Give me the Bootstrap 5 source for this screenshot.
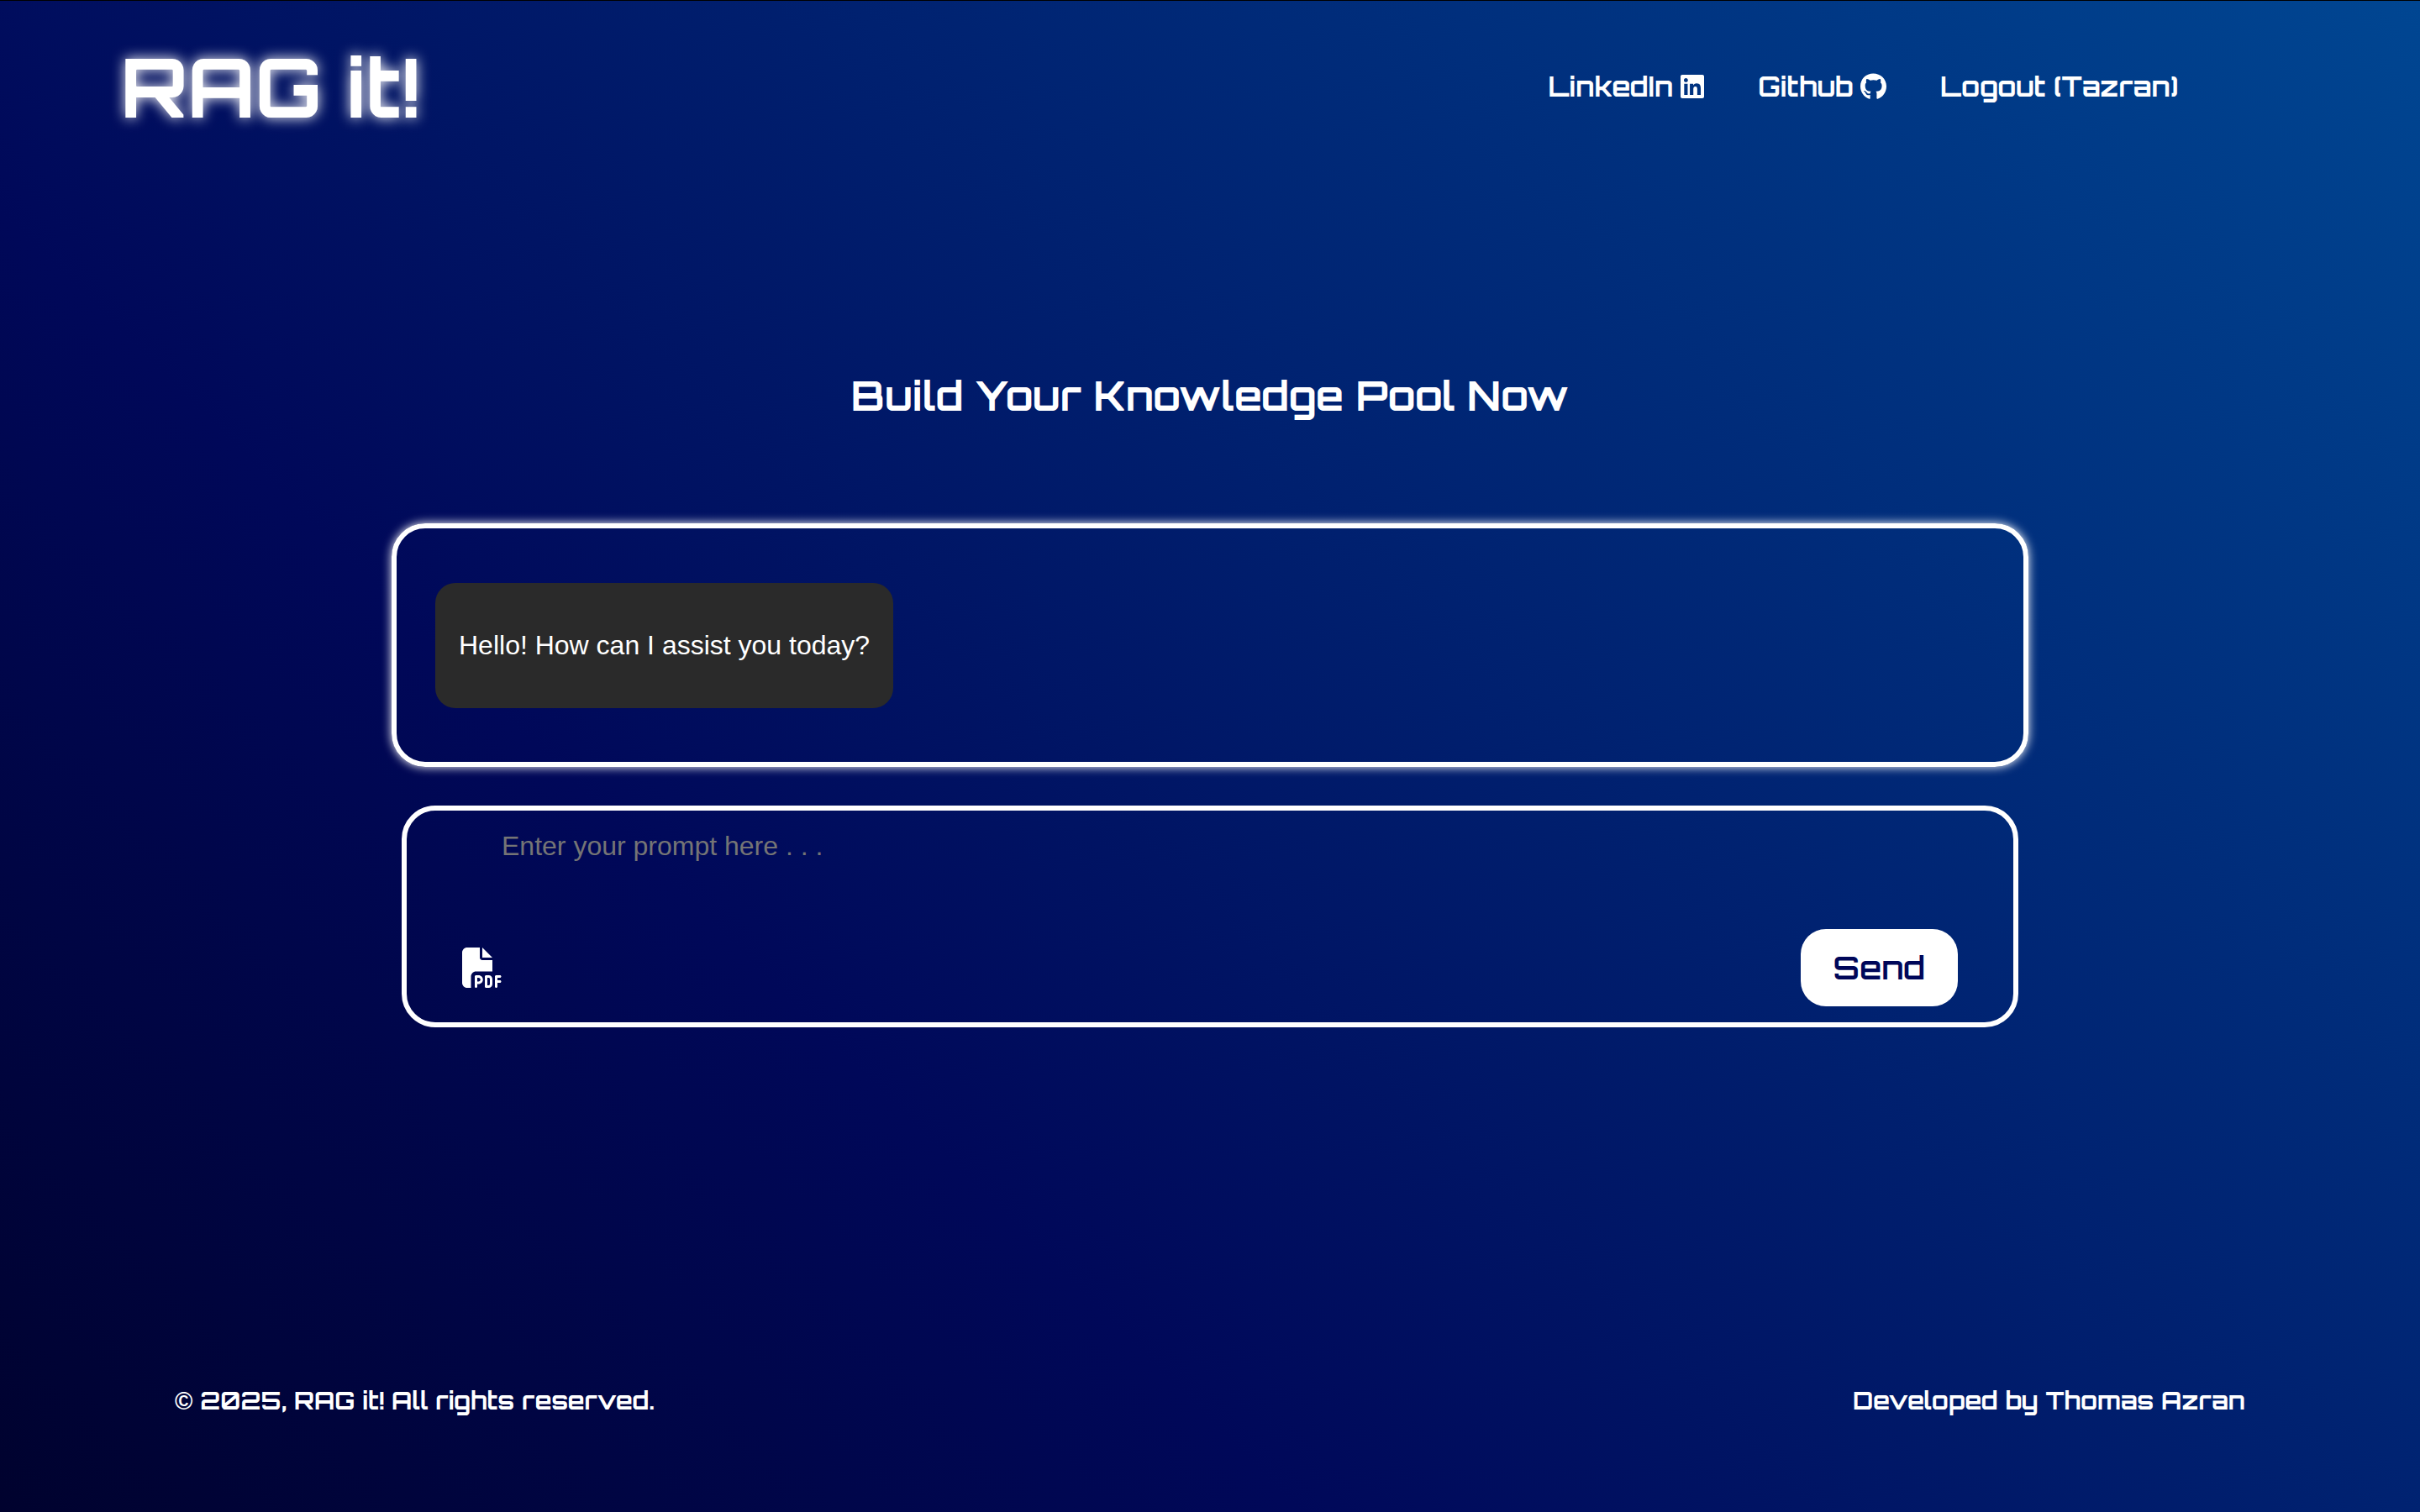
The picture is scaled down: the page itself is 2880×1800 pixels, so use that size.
<!DOCTYPE html>
<html lang="en">
<head>
<meta charset="utf-8">
<meta name="viewport" content="width=device-width, initial-scale=1">
<title>RAG it!</title>
<link href="https://cdn.jsdelivr.net/npm/bootstrap@5.3.0/dist/css/bootstrap.min.css" rel="stylesheet">
<style>
  body {
    font-family: Orbitron, "Liberation Sans", Arial, sans-serif;
    font-weight: 700;
    color: #fff;
    background: linear-gradient(45deg, #00022e 0%, #000859 33%, #004692 100%) no-repeat;
    border-top: 1px solid #000;
  }
  .site-header { padding: 52px 10% 0 5%; }
  .brand-name { font-size: 96px; line-height: 100px; text-shadow: 0 0 16px #fff; }
  .site-nav { gap: 64px; padding-top: 30px; font-size: 32px; line-height: 40px; }
  .site-nav a { gap: 9px; }
  .site-nav svg { height: 32px; fill: currentColor; }
  .chat-main { padding-top: 286px; }
  .chat-title { font-size: 48px; line-height: 64px; font-weight: 700; margin-bottom: 120px; }
  .chat-column { max-width: 1948px; gap: 46px; }
  .chat-log, .prompt-form { border: 6px solid #fff; border-radius: 40px; }
  .chat-log { padding: 65px 46px 64px; box-shadow: 0 0 12px #fff; }
  .bubble, .prompt-text { font: 400 32px/37px "Liberation Sans", Arial, sans-serif; }
  .bubble { padding: 56px 28px; border-radius: 24px; background: #2a2a2a; }
  .prompt-form { margin: 0 12px; }
  .prompt-text {
    height: 141px; padding: 24px 113px; color: #fff; resize: none; outline: 0;
  }
  .prompt-text::placeholder { color: #757575; opacity: 1; }
  .prompt-actions { padding: 0 66px 19px; }
  .pdf-btn svg { display: block; width: 48px; height: 48px; fill: #fff; }
  .send-btn {
    height: 92px; padding: 0 39px; border-radius: 30px; background: #fff;
    color: #000759; font-size: 38px; line-height: 48px; font-weight: 600;
  }
  .send-btn:hover { background: #dfe6ff; color: #000759; }
  .site-footer { padding: 0 208px 113px; font-size: 29px; line-height: 40px; }
</style>
</head>
<body class="d-flex flex-column min-vh-100">
  <header class="site-header d-flex justify-content-between align-items-start">
    <a href="#" class="brand-name text-white text-decoration-none">RAG it!</a>
    <nav class="site-nav d-flex align-items-center">
      <a href="#" class="d-flex align-items-center text-white text-decoration-none">LinkedIn
        <svg viewBox="0 0 448 512" aria-hidden="true"><path d="M416 32H31.9C14.3 32 0 46.5 0 64.3v383.4C0 465.5 14.3 480 31.9 480H416c17.6 0 32-14.5 32-32.3V64.3c0-17.8-14.4-32.3-32-32.3zM135.4 416H69V202.2h66.5V416zm-33.2-243c-21.3 0-38.5-17.3-38.5-38.5S80.9 96 102.2 96c21.2 0 38.5 17.3 38.5 38.5 0 21.3-17.2 38.5-38.5 38.5zm282.1 243h-66.4V312c0-24.8-.5-56.7-34.5-56.7-34.6 0-39.9 27-39.9 54.9V416h-66.4V202.2h63.7v29.2h.9c8.9-16.8 30.6-34.5 62.9-34.5 67.2 0 79.7 44.3 79.7 101.9V416z"/></svg>
      </a>
      <a href="#" class="d-flex align-items-center text-white text-decoration-none">Github
        <svg viewBox="0 0 496 512" aria-hidden="true"><path d="M165.9 397.4c0 2-2.3 3.6-5.2 3.6-3.3.3-5.6-1.3-5.6-3.6 0-2 2.3-3.6 5.2-3.6 3-.3 5.6 1.3 5.6 3.6zm-31.1-4.5c-.7 2 1.3 4.3 4.3 4.9 2.6 1 5.6 0 6.2-2s-1.3-4.3-4.3-5.2c-2.6-.7-5.5.3-6.2 2.3zm44.2-1.7c-2.9.7-4.9 2.6-4.6 4.9.3 2 2.9 3.3 5.9 2.6 2.9-.7 4.9-2.6 4.6-4.6-.3-1.9-3-3.2-5.9-2.9zM244.8 8C106.1 8 0 113.3 0 252c0 110.9 69.8 205.8 169.5 239.2 12.8 2.3 17.3-5.6 17.3-12.1 0-6.2-.3-40.4-.3-61.4 0 0-70 15-84.7-29.8 0 0-11.4-29.1-27.8-36.6 0 0-22.9-15.7 1.6-15.4 0 0 24.9 2 38.6 25.8 21.9 38.6 58.6 27.5 72.9 20.9 2.3-16 8.8-27.1 16-33.7-55.9-6.2-112.3-14.3-112.3-110.5 0-27.5 7.6-41.3 23.6-58.9-2.6-6.5-11.1-33.3 2.6-67.9 20.9-6.5 69 27 69 27 20-5.6 41.5-8.5 62.8-8.5s42.8 2.9 62.8 8.5c0 0 48.1-33.6 69-27 13.7 34.7 5.2 61.4 2.6 67.9 16 17.7 25.8 31.5 25.8 58.9 0 96.5-58.9 104.2-114.8 110.5 9.2 7.9 17 22.9 17 46.4 0 33.7-.3 75.4-.3 83.6 0 6.5 4.6 14.4 17.3 12.1C428.2 457.8 496 362.9 496 252 496 113.3 383.5 8 244.8 8z"/></svg>
      </a>
      <a href="#" class="text-white text-decoration-none">Logout (Tazran)</a>
    </nav>
  </header>

  <main class="chat-main d-flex flex-column align-items-center flex-grow-1">
    <h1 class="chat-title text-center">Build Your Knowledge Pool Now</h1>
    <div class="chat-column d-flex flex-column w-100">
      <section class="chat-log d-flex" aria-label="Conversation">
        <p class="bubble mb-0">Hello! How can I assist you today?</p>
      </section>
      <form class="prompt-form d-flex flex-column">
        <textarea aria-label="Prompt" class="prompt-text w-100 border-0 bg-transparent" placeholder="Enter your prompt here . . ."></textarea>
        <div class="prompt-actions d-flex justify-content-between align-items-center">
          <button type="button" class="pdf-btn btn border-0 p-0" aria-label="Upload PDF">
            <svg viewBox="0 0 512 512" aria-hidden="true"><path d="M0 64C0 28.7 28.7 0 64 0H224V128c0 17.7 14.3 32 32 32H384V304H176c-35.3 0-64 28.7-64 64V512H64c-35.3 0-64-28.7-64-64V64zm384 64H256V0L384 128zM176 352h32c30.9 0 56 25.1 56 56s-25.1 56-56 56H192v32c0 8.8-7.2 16-16 16s-16-7.2-16-16V448 368c0-8.8 7.2-16 16-16zm32 80c13.3 0 24-10.7 24-24s-10.7-24-24-24H192v48h16zm96-80h32c26.5 0 48 21.5 48 48v64c0 26.5-21.5 48-48 48H304c-8.8 0-16-7.2-16-16V368c0-8.8 7.2-16 16-16zm32 128c8.8 0 16-7.2 16-16V400c0-8.8-7.2-16-16-16H320v96h16zm80-112c0-8.8 7.2-16 16-16h48c8.8 0 16 7.2 16 16s-7.2 16-16 16H448v32h32c8.8 0 16 7.2 16 16s-7.2 16-16 16H448v48c0 8.8-7.2 16-16 16s-16-7.2-16-16V432 368z"/></svg>
          </button>
          <button type="submit" class="send-btn btn border-0">Send</button>
        </div>
      </form>
    </div>
  </main>

  <footer class="site-footer d-flex justify-content-between">
    <span>© 2025, RAG it! All rights reserved.</span>
    <span>Developed by Thomas Azran</span>
  </footer>
<script src="https://cdn.jsdelivr.net/npm/bootstrap@5.3.0/dist/js/bootstrap.bundle.min.js"></script>
</body>
</html>
